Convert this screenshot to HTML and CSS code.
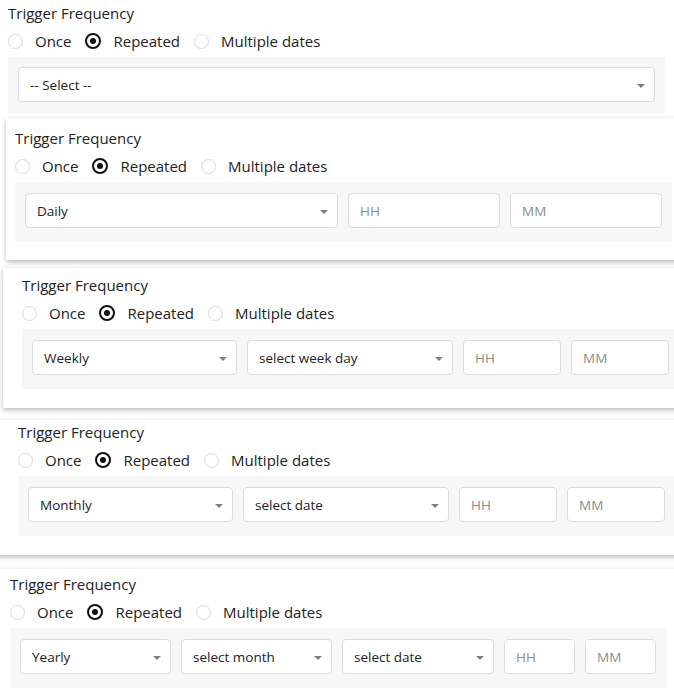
FILE: index.html
```html
<!DOCTYPE html>
<html>
<head>
<meta charset="utf-8">
<link rel="stylesheet" href="styles.css">
</head>
<body>
<div class="stack">

  <section class="shot shot-1">
    <div class="title">Trigger Frequency</div>
    <div class="radios">
      <span class="radio"><span class="dot"></span>Once</span>
      <span class="radio on"><span class="dot"></span>Repeated</span>
      <span class="radio"><span class="dot"></span>Multiple dates</span>
    </div>
    <div class="band band-first">
      <div class="fields cols-1">
        <div class="field select">-- Select --<span class="caret"></span></div>
      </div>
    </div>
  </section>

  <section class="shot card shot-2">
    <div class="title">Trigger Frequency</div>
    <div class="radios">
      <span class="radio"><span class="dot"></span>Once</span>
      <span class="radio on"><span class="dot"></span>Repeated</span>
      <span class="radio"><span class="dot"></span>Multiple dates</span>
    </div>
    <div class="band">
      <div class="fields cols-daily">
        <div class="field select">Daily<span class="caret"></span></div>
        <div class="field ph">HH</div>
        <div class="field ph">MM</div>
      </div>
    </div>
  </section>

  <section class="shot card shot-3">
    <div class="title">Trigger Frequency</div>
    <div class="radios">
      <span class="radio"><span class="dot"></span>Once</span>
      <span class="radio on"><span class="dot"></span>Repeated</span>
      <span class="radio"><span class="dot"></span>Multiple dates</span>
    </div>
    <div class="band">
      <div class="fields cols-weekly">
        <div class="field select">Weekly<span class="caret"></span></div>
        <div class="field select">select week day<span class="caret"></span></div>
        <div class="field ph">HH</div>
        <div class="field ph">MM</div>
      </div>
    </div>
  </section>

  <section class="shot card shot-4">
    <div class="title">Trigger Frequency</div>
    <div class="radios">
      <span class="radio"><span class="dot"></span>Once</span>
      <span class="radio on"><span class="dot"></span>Repeated</span>
      <span class="radio"><span class="dot"></span>Multiple dates</span>
    </div>
    <div class="band">
      <div class="fields cols-weekly">
        <div class="field select">Monthly<span class="caret"></span></div>
        <div class="field select">select date<span class="caret"></span></div>
        <div class="field ph">HH</div>
        <div class="field ph">MM</div>
      </div>
    </div>
  </section>

  <section class="shot card shot-5">
    <div class="title">Trigger Frequency</div>
    <div class="radios">
      <span class="radio"><span class="dot"></span>Once</span>
      <span class="radio on"><span class="dot"></span>Repeated</span>
      <span class="radio"><span class="dot"></span>Multiple dates</span>
    </div>
    <div class="band">
      <div class="fields cols-yearly">
        <div class="field select">Yearly<span class="caret"></span></div>
        <div class="field select">select month<span class="caret"></span></div>
        <div class="field select">select date<span class="caret"></span></div>
        <div class="field ph">HH</div>
        <div class="field ph">MM</div>
      </div>
    </div>
  </section>

</div>
</body>
</html>
```
FILE: styles.css
```css
html, body {
  margin: 0;
  padding: 0;
  overflow: hidden;
  background: #ffffff;
}
body {
  font-family: "Open Sans", Lato, "Liberation Sans", sans-serif;
  color: #222222;
  width: 674px;
  height: 700px;
}
.stack {
  display: flex;
  flex-direction: column;
  align-items: flex-start;
  width: 674px;
  height: 700px;
  overflow: hidden;
}
.shot {
  box-sizing: border-box;
  background: #ffffff;
  flex: none;
}
.card {
  box-shadow: 0 2px 5px rgba(0, 0, 0, 0.28);
  width: 720px;
}
.shot-1 { height: 114px; padding: 3px 0 0 8px; width: 674px; }
.shot-2 { margin-top: 4px; margin-left: 6px; height: 142px; padding: 10px 0 0 9px; }
.shot-3 { margin-top: 8px; margin-left: 3px; height: 140px; padding: 7px 0 0 19px; }
.shot-4 { margin-top: 12px; margin-left: -5px; height: 135px; padding: 2px 0 0 23px; }
.shot-5 { margin-top: 14px; margin-left: -5px; height: 140px; padding: 5px 0 0 15px; }

.title {
  font-size: 15px;
  line-height: 20px;
  height: 20px;
}
.radios {
  display: flex;
  align-items: center;
  height: 24px;
  margin: 6px 0 4px 0;
  font-size: 15px;
}
.radio {
  display: flex;
  align-items: center;
  margin-right: 14px;
}
.dot {
  box-sizing: border-box;
  width: 15px;
  height: 15px;
  border-radius: 50%;
  border: 1.5px solid #d9d9de;
  margin-right: 12px;
  background: #fff;
  display: flex;
  align-items: center;
  justify-content: center;
}
.radio.on .dot {
  width: 16px;
  height: 16px;
  border: 2.5px solid #111;
}
.radio.on .dot::after {
  content: "";
  width: 6px;
  height: 6px;
  border-radius: 50%;
  background: #111;
}
.band {
  box-sizing: border-box;
  width: 657px;
  background: #f7f7f7;
  padding: 11px 10px 14px 10px;
}
.band-first {
  padding: 10px 10px 11px 10px;
}
.fields {
  display: grid;
  gap: 10px;
}
.cols-1 { grid-template-columns: 1fr; }
.cols-daily { grid-template-columns: 313px 152px 152px; }
.cols-weekly { grid-template-columns: 205px 206px 98px 98px; }
.cols-yearly { grid-template-columns: 151px 151px 152px 71px 71px; }

.field {
  box-sizing: border-box;
  height: 35px;
  border: 1px solid #dcdcdc;
  border-radius: 4px;
  background: #fff;
  display: flex;
  align-items: center;
  padding: 0 11px;
  font-size: 13.5px;
  color: #222;
  white-space: nowrap;
}
.field.select {
  justify-content: space-between;
  padding-right: 9px;
}
.field.ph {
  color: #8c8c8c;
}
.caret {
  width: 0;
  height: 0;
  border-left: 4px solid transparent;
  border-right: 4px solid transparent;
  border-top: 4px solid #7a7f86;
  margin-top: 2px;
}
```
